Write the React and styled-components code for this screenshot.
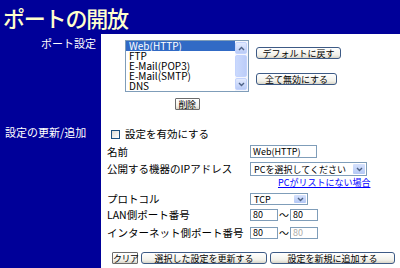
import * as React from "react";
import styled, { createGlobalStyle } from "styled-components";

const GlobalStyle = createGlobalStyle`
  html, body {
    margin: 0;
    padding: 0;
    background: #000099;
  }
  body {
    font-family: "Noto Sans CJK JP", "Liberation Sans", sans-serif;
    -webkit-font-smoothing: none;
  }
`;

// Page skeleton
const Page = styled.div`
  display: grid;
  grid-template-columns: 101px 299px;
  grid-template-rows: 34px auto 1fr;
  width: 400px;
  height: 268px;
  background: #000099;
`;

const Title = styled.h1`
  grid-column: 1 / -1;
  margin: 0;
  padding-left: 3px;
  font-size: 22px;
  font-weight: 500;
  line-height: 34px;
  color: #ffffcc;
  letter-spacing: -1.2px;
`;

const SideLabel = styled.div`
  color: #ffffff;
  font-size: 11px;
  text-align: ${(p) => (p.$right ? "right" : "left")};
  padding: ${(p) => p.$pad};
  line-height: 12px;
  white-space: nowrap;
`;

const Panel = styled.div`
  background: #ffffff;
  padding: ${(p) => p.$pad};
`;

// Section 1
const PortArea = styled.div`
  display: flex;
  align-items: flex-start;
`;

const ListCol = styled.div`
  display: flex;
  flex-direction: column;
  align-items: center;
  gap: 6px;
`;

const ListBox = styled.div`
  display: flex;
  width: 122px;
  height: 50px;
  border: 1px solid #7f9db9;
  background: #fff;
`;

const Options = styled.div`
  flex: 1;
`;

const Option = styled.div`
  font-size: 10px;
  line-height: 10px;
  height: 10px;
  padding-left: 3px;
  white-space: nowrap;
  color: ${(p) => (p.$selected ? "#ffffff" : "#000000")};
  background: ${(p) => (p.$selected ? "#316ac5" : "transparent")};
`;

const ScrollBar = styled.div`
  width: 13px;
  display: flex;
  flex-direction: column;
  background: #f4f6fd;
`;

const ScrollBtn = styled.div`
  height: 10px;
  margin: ${(p) => (p.$bottom ? "0 1px 1px 0" : "1px 1px 0 0")};
  border: 1px solid #c3d3fd;
  border-radius: 2px;
  background: linear-gradient(#e2eafe, #b9cbf7);
  display: flex;
  align-items: center;
  justify-content: center;
`;

const Thumb = styled.div`
  flex: 1;
  margin: 1px 1px 1px 0;
  border: 1px solid #c3d3fd;
  border-radius: 2px;
  background: linear-gradient(90deg, #cad9fd, #bccdf9);
`;

const ButtonCol = styled.div`
  display: flex;
  flex-direction: column;
  align-items: flex-start;
  gap: 14px;
  padding-top: 7px;
  margin-left: 7px;
`;

const XpButton = styled.button`
  box-sizing: border-box;
  width: ${(p) => p.$w}px;
  height: ${(p) => p.$h || 12}px;
  padding: 0;
  font-family: inherit;
  font-size: 9px;
  line-height: 9px;
  letter-spacing: ${(p) => (p.$plain ? "-0.6px" : "0")};
  color: #000;
  border: 1px solid ${(p) => (p.$plain ? "#6b6b6b" : "#3d5a85")};
  border-radius: ${(p) => (p.$plain ? 1 : 3)}px;
  background: linear-gradient(#ffffff, #f2f1ea 70%, #d8d5c8);
  white-space: nowrap;
`;

// Section 2
const Form = styled.div`
  display: flex;
  flex-direction: column;
  line-height: 12px;
`;

const Row = styled.div`
  display: grid;
  grid-template-columns: 143px auto;
  align-items: center;
  height: ${(p) => p.$h}px;
  margin-top: ${(p) => p.$mt || 0}px;
  font-size: 10.5px;
  line-height: 12px;
  white-space: nowrap;
`;

const CheckRow = styled.label`
  display: flex;
  align-items: center;
  gap: 5px;
  height: 12px;
  padding-left: 4px;
  font-size: 10.5px;
  line-height: 12px;
`;

const CheckBox = styled.span`
  box-sizing: border-box;
  width: 9px;
  height: 9px;
  border: 1px solid #1c5180;
  background: linear-gradient(135deg, #dcdcd6, #ffffff);
`;

const TextInput = styled.div`
  box-sizing: border-box;
  width: ${(p) => p.$w}px;
  height: ${(p) => p.$h || 12}px;
  border: 1px solid #7f9db9;
  font-size: 9px;
  line-height: ${(p) => (p.$h || 12) - 2}px;
  padding-left: 2px;
  color: ${(p) => (p.$disabled ? "#acaca8" : "#000")};
  background: #fff;
`;

const Select = styled.div`
  box-sizing: border-box;
  display: flex;
  align-items: stretch;
  width: ${(p) => p.$w}px;
  height: ${(p) => p.$h}px;
  border: 1px solid #7f9db9;
  background: #fff;
`;

const SelectText = styled.span`
  flex: 1;
  font-size: 9px;
  line-height: 9px;
  padding-left: 3px;
  display: flex;
  align-items: center;
`;

const DropBtn = styled.span`
  width: 12px;
  margin: 1px;
  border-radius: 1px;
  background: linear-gradient(#d6e2fd, #b4c8f6);
  display: flex;
  align-items: center;
  justify-content: center;
`;

const PortPair = styled.div`
  display: flex;
  align-items: center;
`;

const Tilde = styled.span`
  width: 12px;
  text-align: center;
  font-size: 10px;
  line-height: 10px;
`;

const LinkRow = styled.div`
  height: 11px;
  margin-top: 1px;
  padding-left: 171px;
  font-size: 9px;
  line-height: 11px;
`;

const HelpLink = styled.a`
  color: #0000ff;
  text-decoration: underline;
`;

const ActionRow = styled.div`
  display: flex;
  gap: 3px;
  margin-top: 13px;
  padding-left: 5px;
`;

const Chevron = ({ up }) => (
  <svg width="7" height="5" viewBox="0 0 7 5">
    <path
      d={up ? "M1 4 L3.5 1.5 L6 4" : "M1 1 L3.5 3.5 L6 1"}
      fill="none"
      stroke="#4d6185"
      strokeWidth="1.4"
    />
  </svg>
);

const services = ["Web(HTTP)", "FTP", "E-Mail(POP3)", "E-Mail(SMTP)", "DNS"];

export default function App() {
  return (
    <>
      <GlobalStyle />
      <Page>
        <Title>ポートの開放</Title>

        <SideLabel $right $pad="3px 5px 0 0">ポート設定</SideLabel>
        <Panel $pad="6px 0 7px 24px">
          <PortArea>
            <ListCol>
              <ListBox>
                <Options>
                  {services.map((s, i) => (
                    <Option key={s} $selected={i === 0}>{s}</Option>
                  ))}
                </Options>
                <ScrollBar>
                  <ScrollBtn><Chevron up /></ScrollBtn>
                  <Thumb />
                  <ScrollBtn $bottom><Chevron /></ScrollBtn>
                </ScrollBar>
              </ListBox>
              <XpButton $w={25} $plain>削除</XpButton>
            </ListCol>
            <ButtonCol>
              <XpButton $w={85}>デフォルトに戻す</XpButton>
              <XpButton $w={81}>全て無効にする</XpButton>
            </ButtonCol>
          </PortArea>
        </Panel>

        <SideLabel $pad="9px 0 0 5px">設定の更新/追加</SideLabel>
        <Panel $pad="11px 0 0 6px">
          <Form>
            <CheckRow>
              <CheckBox />
              設定を有効にする
            </CheckRow>
            <Row $h={13} $mt={5}>
              <span>名前</span>
              <TextInput $w={67} $h={13}>Web(HTTP)</TextInput>
            </Row>
            <Row $h={14} $mt={4}>
              <span>公開する機器のIPアドレス</span>
              <Select $w={117} $h={14}>
                <SelectText>PCを選択してください</SelectText>
                <DropBtn><Chevron /></DropBtn>
              </Select>
            </Row>
            <LinkRow>
              <HelpLink href="#">PCがリストにない場合</HelpLink>
            </LinkRow>
            <Row $h={12} $mt={5}>
              <span>プロトコル</span>
              <Select $w={58} $h={12}>
                <SelectText>TCP</SelectText>
                <DropBtn><Chevron /></DropBtn>
              </Select>
            </Row>
            <Row $h={12} $mt={4}>
              <span>LAN側ポート番号</span>
              <PortPair>
                <TextInput $w={28}>80</TextInput>
                <Tilde>～</Tilde>
                <TextInput $w={28}>80</TextInput>
              </PortPair>
            </Row>
            <Row $h={12} $mt={6}>
              <span>インターネット側ポート番号</span>
              <PortPair>
                <TextInput $w={28}>80</TextInput>
                <Tilde>～</Tilde>
                <TextInput $w={28} $disabled>80</TextInput>
              </PortPair>
            </Row>
            <ActionRow>
              <XpButton $w={26} $plain>クリア</XpButton>
              <XpButton $w={126}>選択した設定を更新する</XpButton>
              <XpButton $w={125}>設定を新規に追加する</XpButton>
            </ActionRow>
          </Form>
        </Panel>
      </Page>
    </>
  );
}
